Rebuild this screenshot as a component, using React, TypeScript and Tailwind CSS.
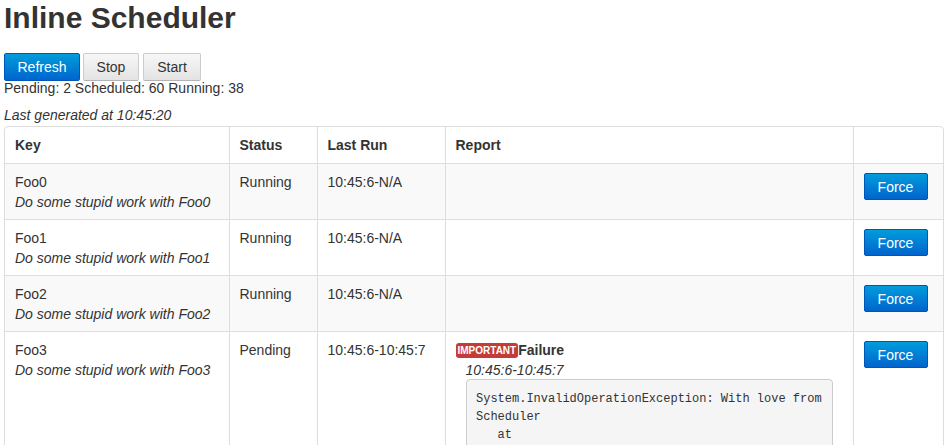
import React from 'react';

interface Job {
    key: string;
    status: string;
    lastRun: string;
    failure?: {
        time: string;
        trace: string;
    };
}

const jobs: Job[] = [
    { key: 'Foo0', status: 'Running', lastRun: '10:45:6-N/A' },
    { key: 'Foo1', status: 'Running', lastRun: '10:45:6-N/A' },
    { key: 'Foo2', status: 'Running', lastRun: '10:45:6-N/A' },
    {
        key: 'Foo3',
        status: 'Pending',
        lastRun: '10:45:6-10:45:7',
        failure: {
            time: '10:45:6-10:45:7',
            trace: 'System.InvalidOperationException: With love from Scheduler\n   at SchedulerDemo.Jobs.StupidJobExecutionHandlerWithLove(Object state)\n   at Scheduler.Runner.Execute()'
        }
    }
];

const head = 'px-[10px] py-[8px] align-top border-l border-[#dddddd] first:border-l-0';
const cell = 'px-[10px] pt-[8px] pb-[7px] align-top border-l border-[#dddddd] first:border-l-0';

export default function App() {
    return (
        <main className="px-[4px] text-[14px] leading-[20px] text-[#333333] font-['Liberation_Sans',Arial,sans-serif] bg-white min-h-screen">
            <h1 className="text-[30px] leading-[36px] font-bold text-[#333333] m-0 mb-[17px]">Inline Scheduler</h1>

            <div className="flex gap-[3px] h-[28px]">
                <button className="w-[76px] h-[28px] text-white border border-[#0055b8] bg-gradient-to-b from-[#049cdb] to-[#0064cd] rounded-[2px]">
                    Refresh
                </button>
                <button className="w-[56px] h-[28px] border border-[#cccccc] border-b-[#b3b3b3] bg-gradient-to-b from-[#f7f7f7] to-[#e3e3e3] rounded-[2px]">
                    Stop
                </button>
                <button className="ml-[1px] w-[58px] h-[28px] border border-[#cccccc] border-b-[#b3b3b3] bg-gradient-to-b from-[#f7f7f7] to-[#e3e3e3] rounded-[2px]">
                    Start
                </button>
            </div>
            <p className="-mt-[3px]">Pending: 2 Scheduled: 60 Running: 38</p>
            <p className="mt-[7px] italic">Last generated at 10:45:20</p>

            <div className="mt-[1px] w-[940px] border border-[#dddddd] rounded-[4px] overflow-hidden">
                <table className="w-full border-collapse table-fixed">
                    <colgroup>
                        <col className="w-[224px]" />
                        <col className="w-[88px]" />
                        <col className="w-[128px]" />
                        <col className="w-[408px]" />
                        <col />
                    </colgroup>
                    <thead>
                        <tr className="text-left">
                            <th className={head}>Key</th>
                            <th className={head}>Status</th>
                            <th className={head}>Last Run</th>
                            <th className={head}>Report</th>
                            <th className={head}></th>
                        </tr>
                    </thead>
                    <tbody>
                        {jobs.map((job, i) => (
                            <tr key={job.key} className={`border-t border-[#dddddd] ${i % 2 === 0 ? 'bg-[#f9f9f9]' : 'bg-white'}`}>
                                <td className={cell}>
                                    <div>{job.key}</div>
                                    <div className="italic">Do some stupid work with {job.key}</div>
                                </td>
                                <td className={cell}>{job.status}</td>
                                <td className={cell}>{job.lastRun}</td>
                                <td className={cell}>
                                    {job.failure && (
                                        <dl>
                                            <dt className="font-bold">
                                                <span className="inline-block align-[1px] h-[15px] leading-[15px] px-[2px] rounded-[3px] bg-[#c43c35] text-white text-[10px] font-bold uppercase">
                                                    Important
                                                </span>
                                                Failure
                                            </dt>
                                            <dd className="ml-[10px]">
                                                <div className="italic">{job.failure.time}</div>
                                                <pre className="-mt-[1px] mr-[10px] p-[9.5px] bg-[#f5f5f5] border border-[#cccccc] rounded-[4px] font-['Liberation_Mono','Courier_New',monospace] text-[12px] leading-[18px] whitespace-pre-wrap break-words">
                                                    {job.failure.trace}
                                                </pre>
                                            </dd>
                                        </dl>
                                    )}
                                </td>
                                <td className={cell}>
                                    <button className="mt-[1px] w-[64px] h-[27px] text-white border border-[#0055b8] bg-gradient-to-b from-[#049cdb] to-[#0064cd] rounded-[2px]">
                                        Force
                                    </button>
                                </td>
                            </tr>
                        ))}
                    </tbody>
                </table>
            </div>
        </main>
    );
}
